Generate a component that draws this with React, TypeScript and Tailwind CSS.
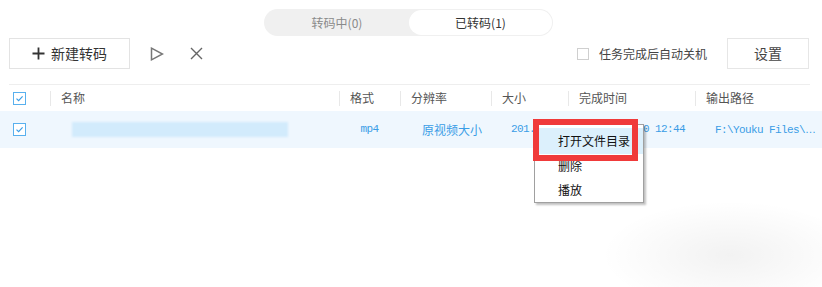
import React from "react";

const cjk = "font-['Noto_Sans_CJK_SC',sans-serif]";
const mono = "font-['Liberation_Mono','Noto_Sans_CJK_SC',monospace] text-[11px] tracking-[-0.6px]";

const Check = () => (
  <div className="w-[13px] h-[13px] border border-[#58b0ee] bg-white flex items-center justify-center">
    <svg width="9" height="9" viewBox="0 0 9 9">
      <path d="M1.5 4.6 L3.6 6.6 L7.6 2.4" fill="none" stroke="#3a9de6" strokeWidth="1.2" />
    </svg>
  </div>
);

const columns = [
  { label: "名称", w: "w-[289px]" },
  { label: "格式", w: "w-[61px]" },
  { label: "分辨率", w: "w-[91px]" },
  { label: "大小", w: "w-[77px]" },
  { label: "完成时间", w: "w-[127px]" },
  { label: "输出路径", w: "w-[115px]" },
];

const App = () => {
  return (
    <div className={`relative w-[822px] h-[287px] bg-white overflow-hidden ${cjk}`}>
      {/* tabs */}
      <div className="pt-[9px] pl-[264px]">
        <div className="flex w-[289px] h-[27px] rounded-full bg-[#f0f0f0] p-[1px] text-[12px]">
          <div className="flex-1 flex items-center justify-center text-[#8a8a8a]">转码中(0)</div>
          <div className="w-[143px] flex items-center justify-center rounded-full bg-white text-[#333]">
            已转码(1)
          </div>
        </div>
      </div>

      {/* toolbar */}
      <div className="flex items-center mt-[2px] pl-[9px] pr-[13px] h-[31px]">
        <button className="w-[121px] h-[31px] border border-[#e3e3e3] flex items-center justify-center gap-[6px] text-[14px] text-[#333]">
          <svg width="13" height="13" viewBox="0 0 13 13">
            <path d="M6.5 0.5 V12.5 M0.5 6.5 H12.5" stroke="#333" strokeWidth="1.8" />
          </svg>
          新建转码
        </button>
        <svg className="ml-[20px]" width="14" height="14" viewBox="0 0 14 14">
          <path d="M1.5 1.2 L12.5 7 L1.5 12.8 Z" fill="none" stroke="#777" strokeWidth="1.5" />
        </svg>
        <svg className="ml-[26px]" width="13" height="13" viewBox="0 0 13 13">
          <path d="M1 1 L12 12 M12 1 L1 12" stroke="#666" strokeWidth="1.4" />
        </svg>
        <div className="ml-auto flex items-center">
          <div className="w-[12px] h-[12px] border border-[#cfcfcf] bg-white" />
          <span className="ml-[10px] text-[12px] text-[#444]">任务完成后自动关机</span>
          <button className="ml-[20px] w-[82px] h-[31px] border border-[#e6e6e6] text-[14px] text-[#444]">设置</button>
        </div>
      </div>

      {/* table header */}
      <div className="mt-[15px] mx-[9px] w-[801px] border-t border-[#eeeeee] h-[27px] flex items-center text-[12px] text-[#555]">
        <div className="w-[41px] pl-[4px]">
          <Check />
        </div>
        {columns.map((c) => (
          <div key={c.label} className={`${c.w} flex items-center h-[15px] border-l border-[#e8e8e8] pl-[10px]`}>
            {c.label}
          </div>
        ))}
      </div>

      {/* row */}
      <div className="h-[37px] bg-[#eff7fe] flex items-center pl-[9px] text-[#3a9de6]">
        <div className="w-[41px] pl-[4px]">
          <Check />
        </div>
        <div className="w-[289px] pl-[22px]">
          <div className="w-[216px] h-[15px] bg-[#d2ebfc] blur-[1px]" />
        </div>
        <div className={`w-[61px] text-center ${mono}`}>mp4</div>
        <div className="w-[91px] pl-[22px] text-[12px]">原视频大小</div>
        <div className={`w-[77px] pl-[20px] ${mono}`}>201.53MB</div>
        <div className={`w-[127px] pl-[21px] ${mono}`}>2018-04-30 12:44</div>
        <div className={`w-[115px] pl-[20px] whitespace-nowrap ${mono}`}>
          F:\Youku Files\<span className="font-['Liberation_Sans',sans-serif] tracking-normal">…</span>
        </div>
      </div>

      {/* context menu */}
      <div className="absolute left-[534px] top-[124px] w-[110px] h-[79px] bg-white border border-[#a0a0a0] shadow-[2px_2px_2px_rgba(0,0,0,0.25)] text-[12px] text-[#111]">
        <div className="mt-[3px] h-[26px] bg-[#dcf0fc] flex items-center pl-[23px]">打开文件目录</div>
        <div className="h-[24px] flex items-center pl-[23px]">删除</div>
        <div className="h-[24px] flex items-center pl-[23px]">播放</div>
      </div>
      <div className="absolute left-[533px] top-[119px] w-[105px] h-[42px] border-[6px] border-[#f03a3a]" />

      {/* faint watermark blur */}
      <div className="absolute left-[600px] top-[200px] w-[260px] h-[110px] bg-[radial-gradient(ellipse_at_center,rgba(0,0,0,0.05),rgba(0,0,0,0)_70%)]" />
    </div>
  );
};

export default App;
